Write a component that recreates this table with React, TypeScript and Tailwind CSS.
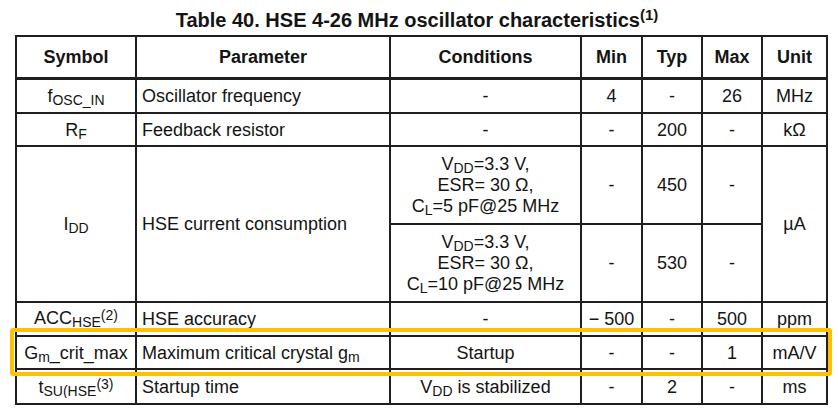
import React from "react";

const Sub = ({ children }: { children: React.ReactNode }) => (
  <span className="relative top-[3px] text-[14px] leading-none">{children}</span>
);
const Sup = ({ children }: { children: React.ReactNode }) => (
  <span className="relative -top-[4px] text-[14px] leading-none">{children}</span>
);

const c = "border-2 border-[#1f1f1f] p-0 text-center align-middle";
const p = "border-2 border-[#1f1f1f] p-0 pl-[5px] text-left align-middle";
const h = "border-2 border-b-[3px] border-[#1f1f1f] p-0 text-center align-middle font-bold";

export default function App() {
  return (
    <div
      className="relative w-[838px] h-[416px] bg-white text-[#141414] overflow-hidden"
      style={{ fontFamily: '"Liberation Sans", Arial, sans-serif' }}
    >
      <div className="h-[35px] pt-[9px] pr-[4px] text-center text-[20px] leading-[22px] font-bold">
        Table 40. HSE 4-26 MHz oscillator characteristics
        <span className="relative -top-[7px] text-[15px] leading-none">(1)</span>
      </div>
      <table className="ml-[15px] w-[811px] table-fixed border-collapse text-[18px] leading-[22px]">
        <colgroup>
          <col className="w-[120px]" />
          <col className="w-[254px]" />
          <col className="w-[191px]" />
          <col className="w-[61px]" />
          <col className="w-[60px]" />
          <col className="w-[60px]" />
          <col className="w-[65px]" />
        </colgroup>
        <tbody>
          <tr className="h-[42px]">
            <td className={h}>Symbol</td>
            <td className={h}>Parameter</td>
            <td className={h}>Conditions</td>
            <td className={h}>Min</td>
            <td className={h}>Typ</td>
            <td className={h}>Max</td>
            <td className={h}>Unit</td>
          </tr>
          <tr className="h-[35px]">
            <td className={c}>
              f<Sub>OSC_IN</Sub>
            </td>
            <td className={p}>Oscillator frequency</td>
            <td className={c}>-</td>
            <td className={c}>4</td>
            <td className={c}>-</td>
            <td className={c}>26</td>
            <td className={c}>MHz</td>
          </tr>
          <tr className="h-[33px]">
            <td className={c}>
              R<Sub>F</Sub>
            </td>
            <td className={p}>Feedback resistor</td>
            <td className={c}>-</td>
            <td className={c}>-</td>
            <td className={c}>200</td>
            <td className={c}>-</td>
            <td className={c}>kΩ</td>
          </tr>
          <tr className="h-[78px]">
            <td className={c} rowSpan={2}>
              I<Sub>DD</Sub>
            </td>
            <td className={p} rowSpan={2}>
              HSE current consumption
            </td>
            <td className={c + " leading-[21px]"}>
              <div>
                V<Sub>DD</Sub>=3.3 V,
              </div>
              <div>ESR= 30 Ω,</div>
              <div>
                C<Sub>L</Sub>=5 pF@25 MHz
              </div>
            </td>
            <td className={c}>-</td>
            <td className={c}>450</td>
            <td className={c}>-</td>
            <td className={c} rowSpan={2}>
              µA
            </td>
          </tr>
          <tr className="h-[78px]">
            <td className={c + " leading-[21px]"}>
              <div>
                V<Sub>DD</Sub>=3.3 V,
              </div>
              <div>ESR= 30 Ω,</div>
              <div>
                C<Sub>L</Sub>=10 pF@25 MHz
              </div>
            </td>
            <td className={c}>-</td>
            <td className={c}>530</td>
            <td className={c}>-</td>
          </tr>
          <tr className="h-[34px]">
            <td className={c}>
              <div className="h-[22px] overflow-hidden -mt-[2px]">
                ACC<Sub>HSE</Sub>
                <Sup>(2)</Sup>
              </div>
            </td>
            <td className={p}>HSE accuracy</td>
            <td className={c}>-</td>
            <td className={c}>− 500</td>
            <td className={c}>-</td>
            <td className={c}>500</td>
            <td className={c}>ppm</td>
          </tr>
          <tr className="h-[33px]">
            <td className={c}>
              G<Sub>m</Sub>_crit_max
            </td>
            <td className={p}>
              Maximum critical crystal g<Sub>m</Sub>
            </td>
            <td className={c}>Startup</td>
            <td className={c}>-</td>
            <td className={c}>-</td>
            <td className={c}>1</td>
            <td className={c}>mA/V</td>
          </tr>
          <tr className="h-[35px]">
            <td className={c}>
              <div className="h-[22px] overflow-hidden">
                t<Sub>SU(HSE</Sub>
                <Sup>(3)</Sup>
              </div>
            </td>
            <td className={p}>Startup time</td>
            <td className={c}>
              V<Sub>DD</Sub> is stabilized
            </td>
            <td className={c}>-</td>
            <td className={c}>2</td>
            <td className={c}>-</td>
            <td className={c}>ms</td>
          </tr>
        </tbody>
      </table>
      <div className="absolute left-[10px] top-[328px] w-[822px] h-[48px] border-4 border-[#ffc000] rounded-[3px]" />
    </div>
  );
}
